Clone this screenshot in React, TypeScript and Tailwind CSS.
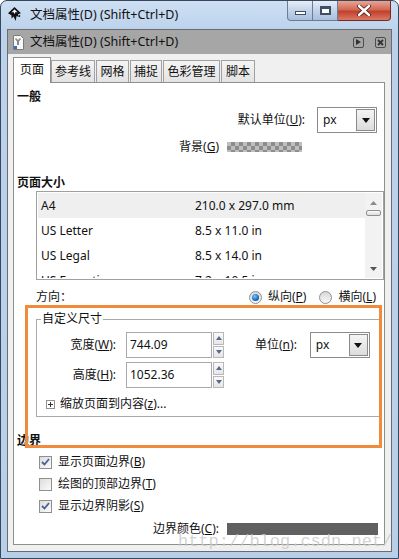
import React from "react";

const ui = "font-['Noto_Sans','Noto_Sans_CJK_SC',sans-serif]";

function InkscapeLogo() {
  return (
    <svg width="17" height="17" viewBox="0 0 17 17" aria-hidden>
      <path d="M8.5 1 L15 7.2 L12 8.2 L12.6 11 L10.6 10 L9.6 15 L7.6 10.4 L5.6 12.6 L5.4 9.2 L2 7.2 Z" fill="#111" />
      <path d="M8.5 3.2 L11.6 6.4 L9.6 6 L8.5 8 L7.4 6 L5.4 6.4 Z" fill="#f4f4f4" />
      <circle cx="13.4" cy="10" r="0.9" fill="#111" />
    </svg>
  );
}

function DocIcon() {
  return (
    <svg width="11" height="15" viewBox="0 0 11 15" aria-hidden>
      <path d="M0.5 0.5 H7.5 L10.5 3.5 V14.5 H0.5 Z" fill="#f8f8f8" stroke="#7b7b7b" />
      <path d="M3 3 L5 5 L7 3 L8 4 L6 6.5 V10 H4 V6.5 L2 4 Z" fill="#8a8a8a" />
      <rect x="1" y="11" width="3" height="3" fill="#2f6fd0" />
    </svg>
  );
}

function WinButtons() {
  return (
    <div className="flex h-[20px] self-start">
      <div className="flex w-[26px] items-center justify-center rounded-bl-[4px] border border-t-0 border-[#6a7d98] bg-[linear-gradient(#e6eef8,#c3d3e8_50%,#aabfdc)]">
        <div className="mt-[5px] h-[4px] w-[11px] border border-[#3d4e66] bg-white" />
      </div>
      <div className="flex w-[25px] items-center justify-center border-b border-r border-[#6a7d98] bg-[linear-gradient(#e6eef8,#c3d3e8_50%,#aabfdc)]">
        <div className="h-[9px] w-[11px] border-2 border-t-[3px] border-[#3d4e66] bg-white" />
      </div>
      <div className="flex w-[53px] items-center justify-center rounded-br-[4px] border-b border-r border-[#7a2a20] bg-[linear-gradient(#e9a596,#d06a55_45%,#c2412e_55%,#d77a64)]">
        <svg width="14" height="11" viewBox="0 0 14 11" aria-hidden>
          <path d="M2 1 L12 10 M12 1 L2 10" stroke="#4a1810" strokeWidth="4" strokeLinecap="round" />
          <path d="M2 1 L12 10 M12 1 L2 10" stroke="#ffffff" strokeWidth="2.4" strokeLinecap="round" />
        </svg>
      </div>
    </div>
  );
}

function Combo({ value, w }: { value: string; w: string }) {
  return (
    <div className={`flex h-[26px] ${w} border border-[#8c8c8c] bg-white`}>
      <span className="flex-1 pl-[5px] text-[12px] leading-[24px]">{value}</span>
      <div className="my-px mr-px flex w-[19px] items-center justify-center border border-[#8a8a8a] bg-[linear-gradient(#f4f4f4,#dcdcdc)]">
        <svg width="8" height="5" viewBox="0 0 8 5" aria-hidden>
          <path d="M0 0 H8 L4 5 Z" fill="#111" />
        </svg>
      </div>
    </div>
  );
}

function Spin() {
  return (
    <div className="ml-px flex h-[26px] w-[11px] flex-col gap-px">
      {["M0 4 L3 0 L6 4 Z", "M0 0 H6 L3 4 Z"].map((d) => (
        <div key={d} className="flex flex-1 items-center justify-center border border-[#b8b8b8] bg-[linear-gradient(#fafafa,#e6e6e6)]">
          <svg width="6" height="4" viewBox="0 0 6 4" aria-hidden>
            <path d={d} fill="#5a6a8c" />
          </svg>
        </div>
      ))}
    </div>
  );
}

function NumField({ label, accel, rest, value, unit }: { label: string; accel: string; rest: string; value: string; unit?: boolean }) {
  return (
    <div className="flex h-[26px] items-center">
      <span className="w-[79px] text-right text-[12px]">
        {label}(<u>{accel}</u>){rest}
      </span>
      <div className="ml-[10px] h-[26px] w-[86px] border border-[#a9a9a9] bg-white pl-[3px] text-[12px] leading-[24px]">{value}</div>
      <Spin />
      {unit ? (
        <>
          <span className="ml-[31px] text-[12px]">
            单位(<u>n</u>):
          </span>
          <div className="ml-[13px]">
            <Combo value="px" w="w-[60px]" />
          </div>
        </>
      ) : null}
    </div>
  );
}

function Radio({ checked, label, accel }: { checked?: boolean; label: string; accel: string }) {
  return (
    <span className="flex items-center gap-[6px]">
      <span className="flex h-[13px] w-[13px] items-center justify-center rounded-full border border-[#8e8f8f] bg-[linear-gradient(#d8d8d8,#f8f8f8)]">
        {checked ? <span className="h-[7px] w-[7px] rounded-full bg-[radial-gradient(circle_at_40%_35%,#7fc4ff,#1568c2_60%,#0d3f86)]" /> : null}
      </span>
      <span className="text-[12px]">
        {label}(<u>{accel}</u>)
      </span>
    </span>
  );
}

function Check({ checked, label, accel }: { checked?: boolean; label: string; accel: string }) {
  return (
    <div className="flex h-[22px] items-center pl-[22px]">
      <span className="flex h-[13px] w-[13px] items-center justify-center border border-[#8e8f8f] bg-[linear-gradient(135deg,#dcdcdc,#fbfbfb)]">
        {checked ? (
          <svg width="9" height="8" viewBox="0 0 9 8" aria-hidden>
            <path d="M1 4 L3.5 6.5 L8 1" stroke="#4b5f96" strokeWidth="1.8" fill="none" />
          </svg>
        ) : null}
      </span>
      <span className="ml-[6px] text-[12px]">
        {label}(<u>{accel}</u>)
      </span>
    </div>
  );
}

const sizes = [
  ["A4", "210.0 x 297.0 mm"],
  ["US Letter", "8.5 x 11.0 in"],
  ["US Legal", "8.5 x 14.0 in"],
  ["US Executive", "7.2 x 10.5 in"],
];

const tabs: [string, string][] = [
  ["参考线", "w-[44px]"],
  ["网格", "w-[33px]"],
  ["捕捉", "w-[32px]"],
  ["色彩管理", "w-[57px]"],
  ["脚本", "w-[34px]"],
];

export default function App() {
  return (
    <div className={`relative flex h-[559px] w-[399px] flex-col overflow-hidden rounded-t-[7px] border border-[#37475c] bg-[linear-gradient(#cddff3,#bcd2ec_30px,#b8cfea)] text-[#111] ${ui}`}>
      <div className="flex h-[28px] shrink-0 items-start">
        <div className="ml-[5px] mt-[5px]">
          <InkscapeLogo />
        </div>
        <span className="ml-[7px] mt-[5px] text-[12.5px] leading-[18px] text-[#111]">文档属性(D) (Shift+Ctrl+D)</span>
        <div className="ml-auto mr-[7px]">
          <WinButtons />
        </div>
      </div>

      <div className="mx-[6px] flex h-[523px] flex-col border border-[#6c6c6c] bg-[#f0f0f0]">
        <div className="flex h-[24px] shrink-0 items-center bg-[#a6a6a6]">
          <div className="ml-[5px]">
            <DocIcon />
          </div>
          <span className="ml-[6px] text-[12.5px]">文档属性(D) (Shift+Ctrl+D)</span>
          <div className="ml-auto mr-[5px] flex gap-[11px]">
            <span className="flex h-[11px] w-[11px] items-center justify-center rounded-[2px] border border-[#4c4c4c]">
              <svg width="5" height="6" viewBox="0 0 5 6" aria-hidden>
                <path d="M0 0 L5 3 L0 6 Z" fill="#333" />
              </svg>
            </span>
            <span className="flex h-[11px] w-[11px] items-center justify-center rounded-[2px] border border-[#4c4c4c]">
              <svg width="7" height="7" viewBox="0 0 7 7" aria-hidden>
                <path d="M1 1 L6 6 M6 1 L1 6" stroke="#333" strokeWidth="1.8" />
              </svg>
            </span>
          </div>
        </div>

        <div className="ml-[5px] mt-[3px] flex h-[25px] items-end">
          <div className="relative z-10 -mb-px h-[26px] w-[38px] border border-b-0 border-[#8e8f8f] bg-white pl-[6px] text-[12px] leading-[24px]">页面</div>
          {tabs.map(([t, w], i) => (
            <div
              key={t}
              className={`${i ? "ml-px" : ""} h-[22px] ${w} border border-b-0 border-[#a0a0a0] bg-[linear-gradient(#f4f4f4,#e3e3e3)] text-center text-[12px] leading-[21px]`}
            >
              {t}
            </div>
          ))}
        </div>

        <div className="ml-[5px] flex h-[463px] w-[372px] flex-col border border-[#8e8f8f] bg-white pl-[3px] text-[12px]">
          <p className="mt-[5px] h-[18px] font-bold leading-[18px]">一般</p>
          <div className="mt-px flex h-[26px] items-center justify-end pr-[7px]">
            <span>
              默认单位(<u>U</u>):
            </span>
            <div className="ml-[12px]">
              <Combo value="px" w="w-[60px]" />
            </div>
          </div>
          <div className="mt-[5px] flex h-[18px] items-center justify-end pr-[82px]">
            <span>
              背景(<u>G</u>)
            </span>
            <div className="ml-[8px] h-[10px] w-[75px] bg-[repeating-conic-gradient(#8d8d8d_0_25%,#bebebe_0_50%)] bg-[length:8px_8px]" />
          </div>
          <p className="mt-[18px] h-[17px] font-bold leading-[17px]">页面大小</p>

          <div className="ml-[19px] flex h-[89px] w-[348px] border border-[#a0a0a0] bg-white p-px">
            <div className="flex-1 overflow-hidden">
              {sizes.map(([n, s], i) => (
                <div key={n} className={`flex h-[25px] shrink-0 items-center ${i === 0 ? "bg-[#efefef]" : ""}`}>
                  <span className="w-[157px] pl-[3px]">{n}</span>
                  <span>{s}</span>
                </div>
              ))}
            </div>
            <div className="flex w-[17px] flex-col items-center bg-[#f2f2f2]">
              <svg className="mt-[8px]" width="7" height="4" viewBox="0 0 7 4" aria-hidden>
                <path d="M0 4 L3.5 0 L7 4 Z" fill="#8a8a8a" />
              </svg>
              <div className="mt-[5px] h-[6px] w-[15px] rounded-[2px] border border-[#8f8f8f] bg-[linear-gradient(#fbfbfb,#dcdcdc)]" />
              <svg className="mt-auto mb-[7px]" width="7" height="4" viewBox="0 0 7 4" aria-hidden>
                <path d="M0 0 H7 L3.5 4 Z" fill="#555" />
              </svg>
            </div>
          </div>

          <div className="mt-[9px] flex h-[16px] items-center pl-[19px] pr-[8px]">
            <span>方向：</span>
            <div className="ml-auto flex gap-[13px]">
              <Radio checked label="纵向" accel="P" />
              <Radio label="横向" accel="L" />
            </div>
          </div>

          <fieldset className="ml-[19px] mt-[6px] w-[344px] border border-[#a9a9a9] px-0 pb-[4px]">
            <legend className="ml-[4px] px-px leading-[16px]">自定义尺寸</legend>
            <div className="mt-[5px] flex flex-col gap-[4px]">
              <NumField label="宽度" accel="W" rest=":" value="744.09" unit />
              <NumField label="高度" accel="H" rest=":" value="1052.36" />
            </div>
            <div className="mt-[8px] flex h-[16px] items-center pl-[9px]">
              <span className="flex h-[9px] w-[9px] items-center justify-center border border-[#919191]">
                <svg width="5" height="5" viewBox="0 0 5 5" aria-hidden>
                  <path d="M0 2.5 H5 M2.5 0 V5" stroke="#333" strokeWidth="1" />
                </svg>
              </span>
              <span className="ml-[5px]">
                缩放页面到内容(<u>z</u>)...
              </span>
            </div>
          </fieldset>

          <p className="mt-[16px] h-[16px] font-bold leading-[16px]">边界</p>
          <div className="mt-[2px]">
            <Check checked label="显示页面边界" accel="B" />
            <Check label="绘图的顶部边界" accel="T" />
            <Check checked label="显示边界阴影" accel="S" />
          </div>
          <div className="mt-[4px] flex h-[16px] items-center justify-end pr-[6px]">
            <span>
              边界颜色(<u>C</u>):
            </span>
            <div className="ml-[8px] h-[12px] w-[151px] bg-[#606060]" />
          </div>
        </div>
      </div>

      <div className="pointer-events-none absolute left-[24px] top-[304px] h-[143px] w-[357px] border-[3px] border-[#f28a3b]" />
      <span className="pointer-events-none absolute left-[177px] top-[531px] font-['Liberation_Mono',monospace] text-[17px] leading-[20px] text-[#c8c8c8]/80">
        http://blog.csdn.net/
      </span>
    </div>
  );
}
